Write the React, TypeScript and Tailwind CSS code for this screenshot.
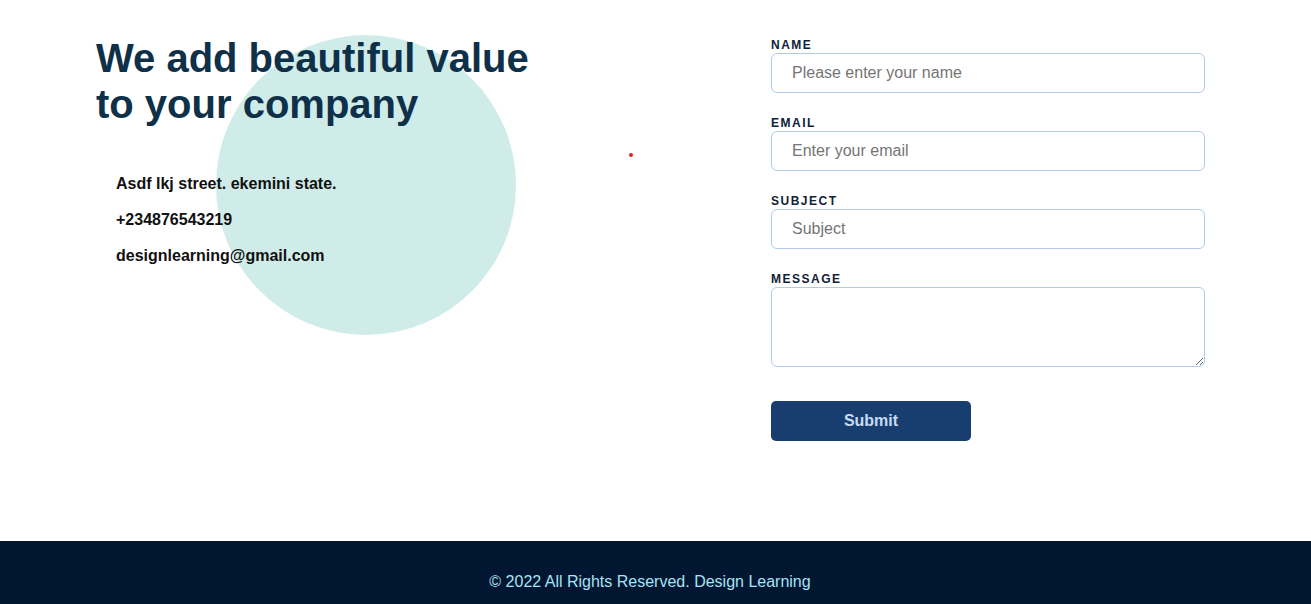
import React from "react";

export default function App() {
  const font = { fontFamily: '"Liberation Sans", Arial, sans-serif' };
  return (
    <div className="bg-white w-[1311px]" style={font}>
      <main className="relative flex h-[541px]">
        <div className="relative w-[771px] shrink-0 pl-[96px] pt-[35px]">
          <div className="absolute left-[216px] top-[35px] h-[300px] w-[300px] rounded-full bg-[#d0ece8]" />
          <h1 className="relative text-[40px] leading-[46px] font-bold text-[#0e3049]">
            We add beautiful value
            <br />
            to your company
          </h1>
          <div className="relative mt-[39px] pl-[20px] text-[16px] leading-[36px] font-bold text-[#111]">
            <p>Asdf lkj street. ekemini state.</p>
            <p>+234876543219</p>
            <p>designlearning@gmail.com</p>
          </div>
          <div className="absolute left-[629px] top-[153px] h-[4px] w-[4px] rounded-full bg-[#e8211e]" />
        </div>
        <form className="w-[434px] shrink-0 pt-[37px] flex flex-col">
          <label className="block text-[12px] leading-[16px] font-bold tracking-[1.5px] text-[#0e2238]">NAME</label>
          <input
            className="h-[40px] w-full rounded-[6px] border border-[#b3caeb] px-[20px] text-[16px] text-[#333] placeholder:text-[#757575] outline-none"
            placeholder="Please enter your name"
          />
          <label className="mt-[22px] block text-[12px] leading-[16px] font-bold tracking-[1.5px] text-[#0e2238]">EMAIL</label>
          <input
            className="h-[40px] w-full rounded-[6px] border border-[#b3caeb] px-[20px] text-[16px] text-[#333] placeholder:text-[#757575] outline-none"
            placeholder="Enter your email"
          />
          <label className="mt-[22px] block text-[12px] leading-[16px] font-bold tracking-[1.5px] text-[#0e2238]">SUBJECT</label>
          <input
            className="h-[40px] w-full rounded-[6px] border border-[#b3caeb] px-[20px] text-[16px] text-[#333] placeholder:text-[#757575] outline-none"
            placeholder="Subject"
          />
          <label className="mt-[22px] block text-[12px] leading-[16px] font-bold tracking-[1.5px] text-[#0e2238]">MESSAGE</label>
          <textarea className="block h-[80px] w-full rounded-[6px] border border-[#b3caeb] px-[20px] py-[8px] text-[16px] outline-none" />
          <button
            type="button"
            className="mt-[34px] h-[40px] w-[200px] rounded-[5px] bg-[#183e70] text-[16px] font-bold text-[#c6dbf5]"
          >
            Submit
          </button>
        </form>
      </main>
      <footer className="h-[63px] bg-[#011731] pt-[29px] pr-[11px] text-center text-[16px] leading-[24px] text-[#a8e2f6]">
        © 2022 All Rights Reserved. Design Learning
      </footer>
    </div>
  );
}
